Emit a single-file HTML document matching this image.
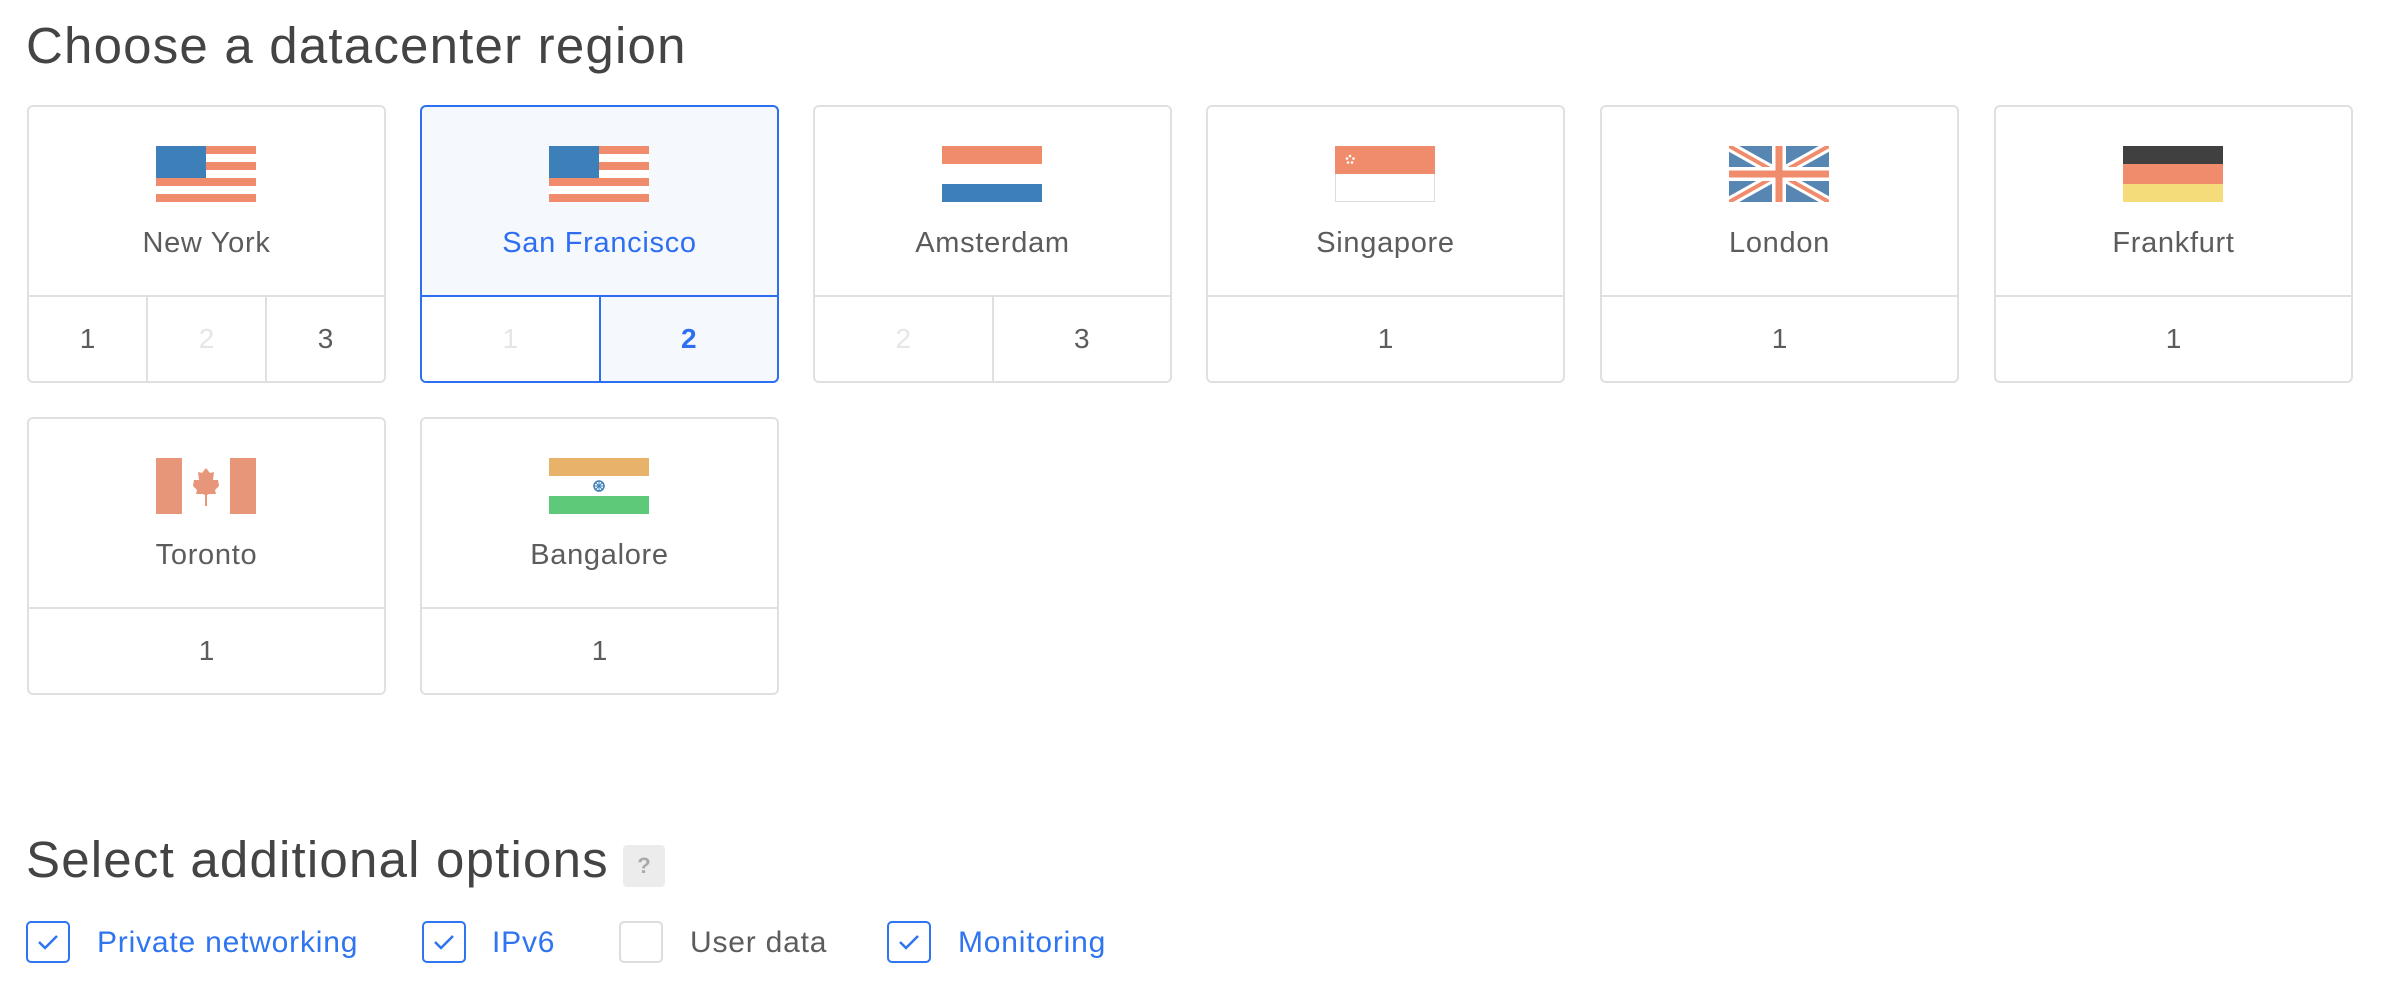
<!DOCTYPE html>
<html><head><meta charset="utf-8"><style>
html,body{margin:0;padding:0;background:#fff;width:2406px;height:1004px;overflow:hidden;font-family:"Liberation Sans",sans-serif;}
.t{position:absolute;color:#444;font-size:51px;letter-spacing:1.2px;white-space:nowrap;}
.card{position:absolute;width:355px;height:274px;border:2px solid #e0e0e0;border-radius:6px;background:#fff;box-sizing:content-box;overflow:hidden}
.card .top{position:absolute;left:0;top:0;width:355px;height:188px;border-bottom:2px solid #e0e0e0}
.card .flag{position:absolute;left:127px;top:39px;width:100px;height:56px}
.card .name{position:absolute;left:0;width:355px;top:120px;text-align:center;font-size:29px;letter-spacing:0.7px;color:#5c5c5c}
.card .bot{position:absolute;left:0;top:190px;width:355px;height:84px;display:flex}
.card .bot div{flex:1;text-align:center;line-height:84px;font-size:28px;color:#5c5c5c;border-left:2px solid #e0e0e0}
.card .bot div:first-child{border-left:none}
.card .bot div.d{color:#e6e6e6}
.sel{border-color:#2d6ff0;background:#f5f8fd}
.sel .top{border-bottom-color:#2d6ff0;}
.sel .name{color:#2d6ff0}
.sel .bot div{border-left-color:#2d6ff0}
.cb{position:absolute;top:921px;width:40px;height:38px;border:2px solid #2f74f0;border-radius:5px}
.cb.off{border-color:#ddd}
.lbl{position:absolute;top:926px;font-size:30px;letter-spacing:0.8px;color:#2f74f0;white-space:nowrap}
</style></head><body>
<div class="t" style="left:26px;top:16px">Choose a datacenter region</div>

<div class="card" style="left:27px;top:105px"><div class="top">
<svg class="flag" viewBox="0 0 100 56"><rect width="100" height="56" fill="#fff"/><g fill="#f08b6c"><rect y="0" width="100" height="8"/><rect y="16" width="100" height="8"/><rect y="32" width="100" height="8"/><rect y="48" width="100" height="8"/></g><rect width="50" height="32" fill="#3d7fb8"/></svg>
<div class="name">New York</div></div>
<div class="bot"><div>1</div><div class="d">2</div><div>3</div></div></div>

<div class="card sel" style="left:420px;top:105px"><div class="top">
<svg class="flag" viewBox="0 0 100 56"><rect width="100" height="56" fill="#fff"/><g fill="#f08b6c"><rect y="0" width="100" height="8"/><rect y="16" width="100" height="8"/><rect y="32" width="100" height="8"/><rect y="48" width="100" height="8"/></g><rect width="50" height="32" fill="#3d7fb8"/></svg>
<div class="name">San Francisco</div></div>
<div class="bot"><div class="d" style="background:#fff">1</div><div style="color:#2d6ff0;font-weight:bold">2</div></div></div>

<div class="card" style="left:813px;top:105px"><div class="top">
<svg class="flag" viewBox="0 0 100 56"><rect width="100" height="18" fill="#f08b6c"/><rect y="38" width="100" height="18" fill="#3d7fb8"/></svg>
<div class="name">Amsterdam</div></div>
<div class="bot"><div class="d">2</div><div>3</div></div></div>

<div class="card" style="left:1206px;top:105px"><div class="top">
<svg class="flag" viewBox="0 0 100 56"><rect x="0.5" y="0.5" width="99" height="55" fill="#fff" stroke="#ddd"/><rect width="100" height="28" fill="#f08b6c"/><path d="M12 5 a9 9 0 1 0 0 18 a7 7 0 1 1 0-18z" fill="#fff"/><g fill="#fff"><circle cx="15" cy="10" r="1.3"/><circle cx="18.5" cy="12.5" r="1.3"/><circle cx="17" cy="16.5" r="1.3"/><circle cx="13" cy="16.5" r="1.3"/><circle cx="12" cy="12.5" r="1.3"/></g></svg>
<div class="name">Singapore</div></div>
<div class="bot"><div>1</div></div></div>

<div class="card" style="left:1600px;top:105px"><div class="top">
<svg class="flag" viewBox="0 0 100 56"><rect width="100" height="56" fill="#5786b3"/><path d="M0 0L100 56M100 0L0 56" stroke="#fff" stroke-width="10"/><path d="M0 0L100 56M100 0L0 56" stroke="#f08b6c" stroke-width="4"/><path d="M50 0V56M0 28H100" stroke="#fff" stroke-width="14"/><path d="M50 0V56M0 28H100" stroke="#f08b6c" stroke-width="7"/></svg>
<div class="name">London</div></div>
<div class="bot"><div>1</div></div></div>

<div class="card" style="left:1994px;top:105px"><div class="top">
<svg class="flag" viewBox="0 0 100 56"><rect width="100" height="18" fill="#404040"/><rect y="18" width="100" height="20" fill="#f08b6c"/><rect y="38" width="100" height="18" fill="#f5dc7a"/></svg>
<div class="name">Frankfurt</div></div>
<div class="bot"><div>1</div></div></div>

<div class="card" style="left:27px;top:417px"><div class="top">
<svg class="flag" viewBox="0 0 100 56"><g fill="#e8967a"><rect width="26" height="56"/><rect x="74" width="26" height="56"/><path d="M50 10L54 15L58 14L57 22L62 22L63 28L59 32L60 36L53 36L51 37L51 48L49 48L49 37L47 36L40 36L41 32L37 28L38 22L43 22L42 14L46 15Z"/></g></svg>
<div class="name">Toronto</div></div>
<div class="bot"><div>1</div></div></div>

<div class="card" style="left:420px;top:417px"><div class="top">
<svg class="flag" viewBox="0 0 100 56"><rect width="100" height="18" fill="#e8b26b"/><rect y="38" width="100" height="18" fill="#5fc97a"/><circle cx="50" cy="28" r="5" fill="none" stroke="#3d7fb8" stroke-width="1.5"/><path d="M45 28H55M50 23V33M46.5 24.5L53.5 31.5M53.5 24.5L46.5 31.5" stroke="#3d7fb8" stroke-width="1"/></svg>
<div class="name">Bangalore</div></div>
<div class="bot"><div>1</div></div></div>

<div class="t" style="left:26px;top:830px">Select additional options</div>
<div style="position:absolute;left:623px;top:845px;width:42px;height:42px;background:#ececec;border-radius:4px;color:#aaa;font-size:22px;font-weight:bold;text-align:center;line-height:42px">?</div>

<div class="cb" style="left:26px"><svg width="40" height="38" viewBox="0 0 40 38"><path d="M11 19L17 25L29 13" fill="none" stroke="#2f74f0" stroke-width="2.5"/></svg></div>
<div class="lbl" style="left:97px">Private networking</div>
<div class="cb" style="left:422px"><svg width="40" height="38" viewBox="0 0 40 38"><path d="M11 19L17 25L29 13" fill="none" stroke="#2f74f0" stroke-width="2.5"/></svg></div>
<div class="lbl" style="left:492px">IPv6</div>
<div class="cb off" style="left:619px"></div>
<div class="lbl" style="left:690px;color:#5c5c5c">User data</div>
<div class="cb" style="left:887px"><svg width="40" height="38" viewBox="0 0 40 38"><path d="M11 19L17 25L29 13" fill="none" stroke="#2f74f0" stroke-width="2.5"/></svg></div>
<div class="lbl" style="left:958px">Monitoring</div>
</body></html>
